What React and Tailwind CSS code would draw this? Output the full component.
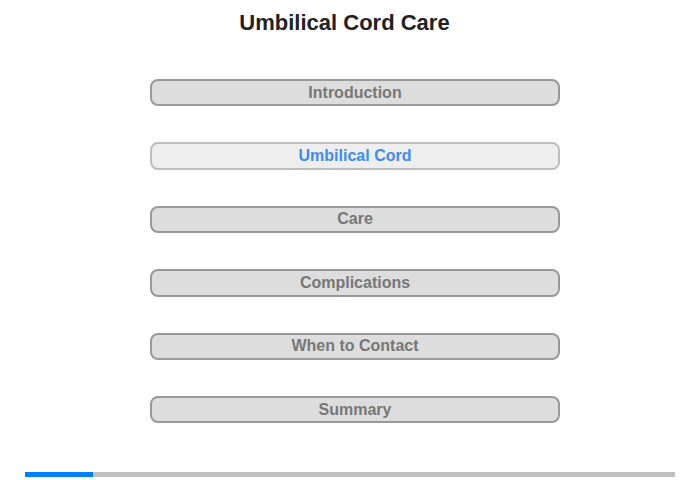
const sections = [
  'Introduction',
  'Umbilical Cord',
  'Care',
  'Complications',
  'When to Contact',
  'Summary',
]

export default function App() {
  const active = 1

  return (
    <div className="w-[700px] h-[480px] bg-white flex flex-col items-center" style={{ fontFamily: '"Liberation Sans", Arial, sans-serif' }}>
      <h1 className="mt-[10px] mr-[11px] h-[26px] text-[22px] leading-[26px] font-bold text-[#222]">Umbilical Cord Care</h1>

      <div className="mt-[43px] ml-[10px] flex flex-col gap-[36px]">
        {sections.map((s, i) => (
          <button
            key={s}
            type="button"
            className={
              i === active
                ? 'w-[410px] h-[27.4px] rounded-[8px] border-2 border-[#bdbdbd] bg-[#eeeeee] text-[16px] font-bold text-[#3d8cf5] leading-none flex items-center justify-center'
                : 'w-[410px] h-[27.4px] rounded-[8px] border-2 border-[#999999] bg-[#dddddd] text-[16px] font-bold text-[#777777] leading-none flex items-center justify-center'
            }
          >
            {s}
          </button>
        ))}
      </div>

      <div className="mt-auto mb-[3px] w-[650px] h-[5px] bg-[#c0c0c0] flex">
        <div className="w-[68px] h-full bg-[#0080ff]" />
      </div>
    </div>
  )
}
